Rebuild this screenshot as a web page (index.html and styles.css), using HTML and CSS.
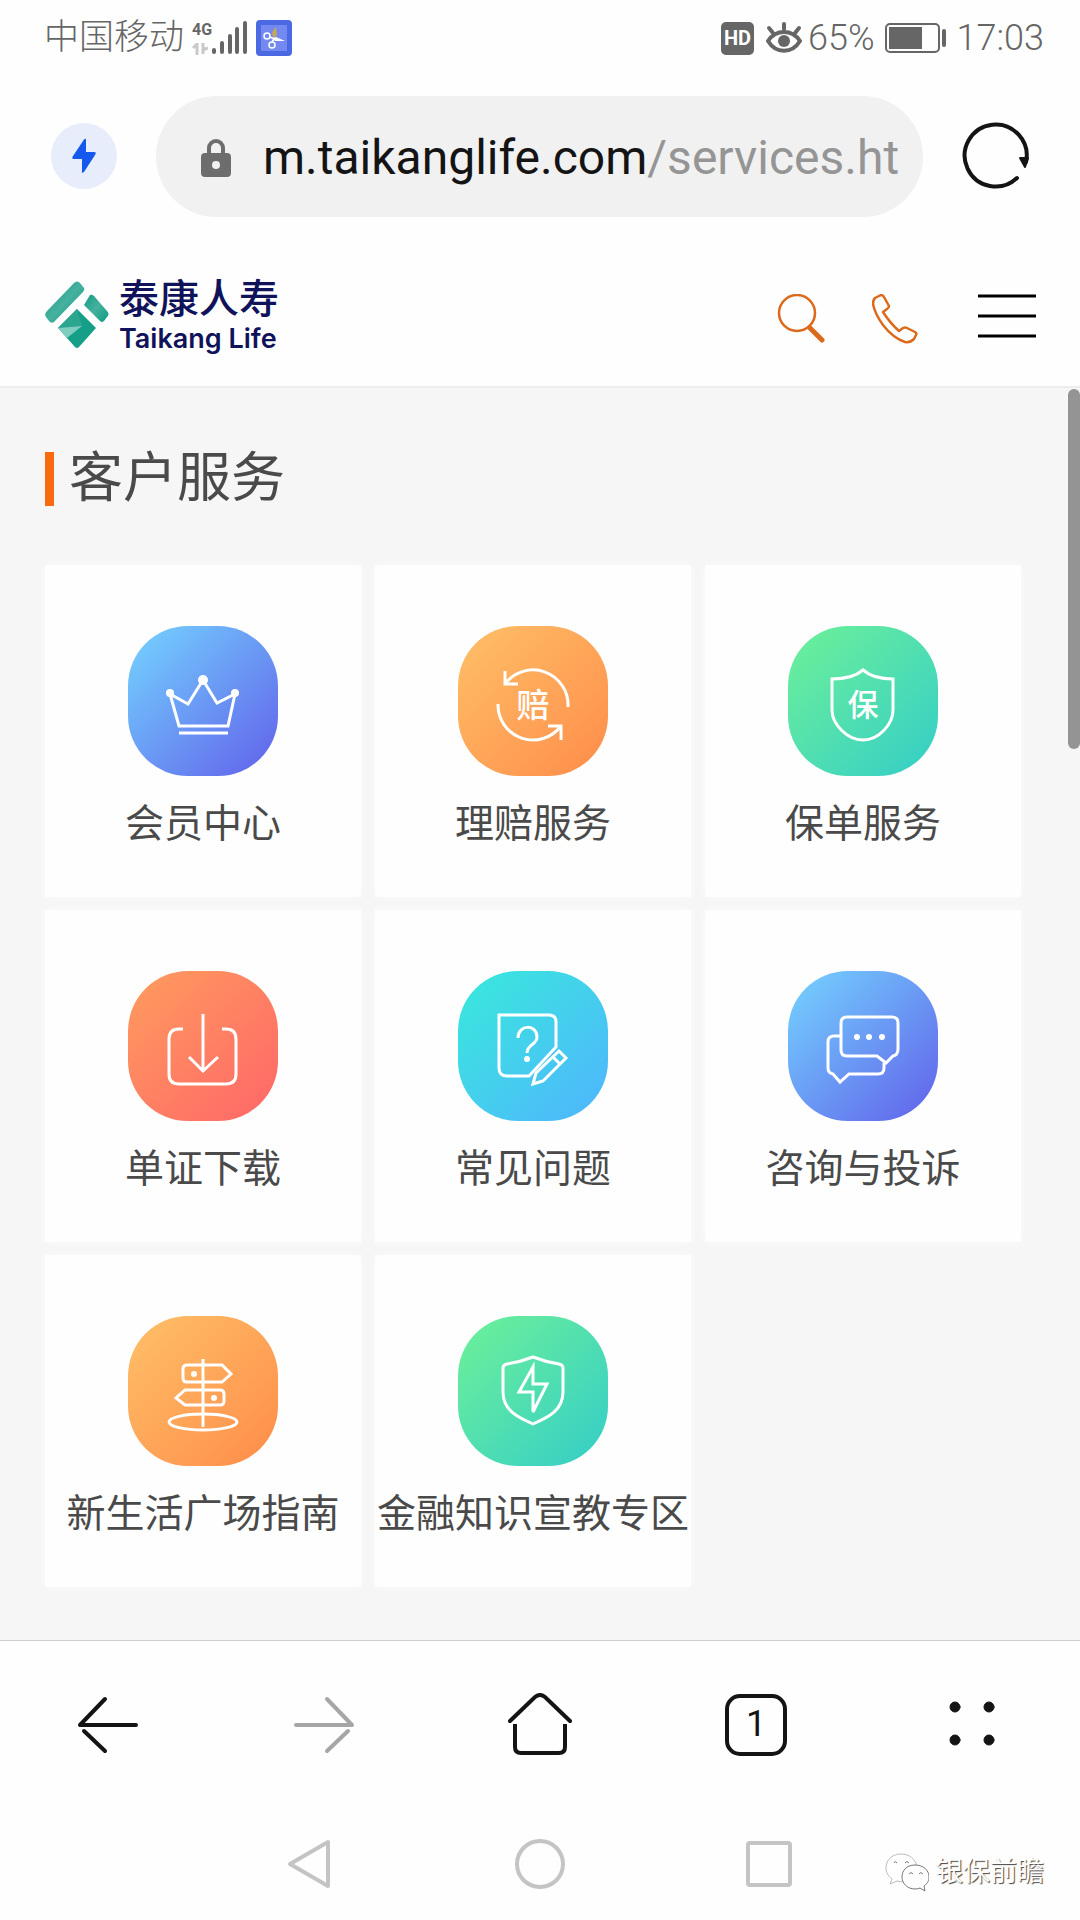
FILE: index.html
```
<!DOCTYPE html>
<html lang="zh-CN">
<head>
    <meta charset="UTF-8">
    <meta name="viewport" content="width=device-width, initial-scale=1.0">
    <title>泰康人寿 - 客户服务</title>
    <link rel="stylesheet" href="styles.css">
</head>
<body>
    <div class="status-bar">
        <div class="status-left">
            <span class="carrier">中国移动</span>
            <span class="signal">
                <span class="network">
                    <span>4G</span>
                    <svg width="16" height="12" viewBox="0 0 16 12" fill="none" stroke="#c9c9c9" stroke-width="3"><path d="M1 5L5 1V12M11 0V11M11 7L16 5"/></svg>
                </span>
                <svg width="36" height="34" viewBox="0 0 36 34" stroke="#666" stroke-width="4" stroke-linecap="round"><path d="M2 29V31M10 22V31M18 15V31M25 8V31M33 2V31"/></svg>
            </span>
            <svg class="app-icon" width="36" height="36" viewBox="0 0 36 36" fill="none">
                <rect width="36" height="36" rx="4" fill="#4a69e2"/>
                <rect x="5" y="5" width="26" height="26" fill="#7389f0"/>
                <path d="M17 18L16 12L20 7L21 15Z" fill="#c8a45c"/>
                <path d="M16 18L20 17L29 21L19 21Z" fill="#fff"/>
                <circle cx="11" cy="16" r="3" stroke="#fff" stroke-width="1.500"/>
                <circle cx="16" cy="25" r="3" stroke="#fff" stroke-width="1.500"/>
                <path d="M14 17L18 19L16 22" stroke="#fff" stroke-width="1.500"/>
            </svg>
        </div>
        <div class="status-right">
            <span class="hd">HD</span>
            <svg class="eye" width="36" height="32" viewBox="0 0 36 32" fill="none" stroke="#666" stroke-width="4" stroke-linecap="round">
                <path d="M2 19C10 7 26 7 34 19C26 32 10 32 2 19Z"/>
                <path d="M18 2V7M3 6L7 11M33 6L29 11"/>
                <circle cx="18" cy="19" r="6" fill="#666" stroke="none"/>
            </svg>
            <span>65%</span>
            <svg class="battery" width="62" height="30" viewBox="0 0 62 30" fill="none">
                <rect x="1" y="1" width="53" height="28" rx="4" stroke="#666" stroke-width="2"/>
                <rect x="4" y="4" width="33" height="22" fill="#666"/>
                <rect x="57" y="6" width="4" height="18" rx="2" fill="#666"/>
            </svg>
            <span class="clock">17:03</span>
        </div>
    </div>

    <div class="address-row">
        <button class="boost" aria-label="加速">
            <svg width="26" height="36" viewBox="0 0 26 36"><path d="M13 1.500Q15 0 15 2V14H23Q26 14 24 17L13 34Q10 36 11 33V21H3Q0 21 2 18Z" fill="#1558ee"/></svg>
        </button>
        <button class="address" aria-label="地址栏">
            <svg width="30" height="40" viewBox="0 0 30 40"><path d="M8 17V10A7 7 0 0 1 22 10V17" fill="none" stroke="#6d6d6d" stroke-width="4"/><path d="M4 15H26Q30 15 30 19V35Q30 39 26 39H4Q0 39 0 35V19Q0 15 4 15Z" fill="#6d6d6d"/><circle cx="15" cy="27" r="4" fill="#f1f1f1"/></svg>
            <span class="url">m.taikanglife.com<span class="url-path">/services.ht</span></span>
        </button>
        <button class="reload" aria-label="刷新">
            <svg width="68" height="68" viewBox="0 0 68 68" fill="none" stroke="#141414" stroke-width="4" stroke-linecap="round"><path d="M55 56A31 31 0 1 1 64 40"/><path d="M58 36H66L63 45Z" fill="#141414" stroke-width="2" stroke-linejoin="round"/></svg>
        </button>
    </div>

    <header class="site-header">
        <a class="logo" href="#">
            <svg width="64" height="70" viewBox="0 0 64 70">
                <defs>
                    <linearGradient id="teal" x1="0" y1="0" x2="1" y2="1">
                        <stop offset="0" stop-color="#159c84"/>
                        <stop offset="0.5" stop-color="#45b19e"/>
                        <stop offset="1" stop-color="#0c9a82"/>
                    </linearGradient>
                </defs>
                <path d="M29 3Q32 0 35 3L39 8Q40 10 38 12L9 42Q6 44 4 41L1 37Q-1 34 2 31Z" fill="url(#teal)"/>
                <path d="M45 15Q47 14 49 16L62 31Q65 34 62 37L59 41Q57 43 55 41L39 25Z" fill="url(#teal)"/>
                <path d="M32 29L51 48L34 67Q32 69 30 67L13 48Z" fill="#169f88"/>
                <path d="M32 29L13 48L37 46Z" fill="#2da68f"/>
                <path d="M13 48L37 46L22 58Z" fill="#7fcdbf"/>
            </svg>
            <span class="logo-text">
                <span class="logo-cn">泰康人寿</span>
                <span class="logo-en">Taikang Life</span>
            </span>
        </a>
        <nav class="header-tools">
            <button aria-label="搜索">
                <svg width="48" height="50" viewBox="0 0 48 50" fill="none" stroke="#dc6a1c" stroke-linecap="round"><circle cx="20" cy="19" r="18" stroke-width="2.500"/><path d="M33 34L45 46" stroke-width="5"/></svg>
            </button>
            <button class="phone" aria-label="电话">
                <svg width="46" height="50" viewBox="0 0 46 50" fill="none" stroke="#dc6a1c" stroke-width="2.500" stroke-linejoin="round"><path d="M3 4L9 1Q11 1 12 3L17 12Q17 14 15 15L11 18Q18 29 27 37L31 34Q33 33 35 34L43 38Q45 39 44 41L42 45Q38 49 33 48Q21 44 11 31Q3 20 1 10Q1 6 3 4Z"/></svg>
            </button>
            <button class="menu" aria-label="菜单">
                <svg width="58" height="44" viewBox="0 0 58 44" stroke="#000" stroke-width="3"><path d="M0 2H58M0 22H58M0 42H58"/></svg>
            </button>
        </nav>
    </header>

    <main class="content">
        <h1>客户服务</h1>
        <div class="services">
            <a class="card" href="#">
                <span class="tile blue">
                    <svg viewBox="0 0 150 150"><path d="M42 68L60 78L75 54L89 77L107 68L100 100H51Z"/><path d="M51 107H100"/><g class="solid"><circle cx="42" cy="67" r="4"/><circle cx="75" cy="54" r="5"/><circle cx="107" cy="67" r="4"/></g></svg>
                </span>
                <span class="label">会员中心</span>
            </a>
            <a class="card" href="#">
                <span class="tile orange">
                    <svg viewBox="0 0 150 150"><path d="M47 58A35 35 0 0 1 110 81M47 45V58H60M40 78A35 35 0 0 0 103 100M90 100H103V114"/><text x="75" y="91" font-size="33">赔</text></svg>
                </span>
                <span class="label">理赔服务</span>
            </a>
            <a class="card" href="#">
                <span class="tile green">
                    <svg viewBox="0 0 150 150"><path d="M75 44C67 51 57 53 44 53V84C44 98 59 114 75 114S105 98 105 84V53C93 53 83 51 75 44Z"/><text x="75" y="90" font-size="31">保</text></svg>
                </span>
                <span class="label">保单服务</span>
            </a>
            <a class="card" href="#">
                <span class="tile red">
                    <svg viewBox="0 0 150 150"><path d="M55 58H51Q41 58 41 68V103Q41 113 51 113H98Q108 113 108 103V68Q108 58 98 58H94M75 43V100M61 86L75 100L90 86"/></svg>
                </span>
                <span class="label">单证下载</span>
            </a>
            <a class="card" href="#">
                <span class="tile cyan">
                    <svg viewBox="0 0 150 150"><path d="M41 44H91Q98 44 98 51V76L71 105H49Q41 105 41 97Z"/><path d="M60 67C60 53 79 53 79 66C79 74 69 73 69 82"/><circle class="solid" cx="69" cy="88" r="3"/><path d="M75 113L78 102L101 80L108 87L85 110ZM95 86L102 93"/></svg>
                </span>
                <span class="label">常见问题</span>
            </a>
            <a class="card" href="#">
                <span class="tile blue">
                    <svg viewBox="0 0 150 150"><path d="M59 46H104Q110 46 110 52V78Q110 84 105 85L98 92L89 85H59Q53 85 53 79V52Q53 46 59 46Z"/><path d="M53 65H46Q40 65 40 71V97Q40 102 45 103L52 111L61 103H90Q96 103 96 97V92"/><g class="solid"><circle cx="69" cy="66" r="3"/><circle cx="81" cy="66" r="3"/><circle cx="94" cy="66" r="3"/></g></svg>
                </span>
                <span class="label">咨询与投诉</span>
            </a>
            <a class="card" href="#">
                <span class="tile orange">
                    <svg viewBox="0 0 150 150"><path d="M75 43V111M59 49H94L103 58L94 66H59Q55 66 55 62V53Q55 49 59 49ZM57 74H92Q96 74 96 78V85Q96 89 92 89H57L48 82Z"/><ellipse cx="75" cy="106" rx="34" ry="8"/><g class="solid"><circle cx="66" cy="58" r="3"/><circle cx="86" cy="82" r="3"/></g></svg>
                </span>
                <span class="label">新生活广场指南</span>
            </a>
            <a class="card" href="#">
                <span class="tile green">
                    <svg viewBox="0 0 150 150"><path d="M75 41Q88 46 101 48Q105 49 105 52V76C105 94 91 101 75 108C59 101 45 94 45 76V52Q45 49 49 48Q62 46 75 41ZM75 51L61 76H75V96L89 68H75Z"/></svg>
                </span>
                <span class="label">金融知识宣教专区</span>
            </a>
        </div>
        <div class="scrollbar"></div>
    </main>

    <nav class="browser-nav">
        <button aria-label="后退"><svg width="64" height="64" viewBox="0 0 64 64"><path d="M4 32H60M29 6L4 32M8 38L29 58"/></svg></button>
        <button class="disabled" aria-label="前进" disabled><svg width="64" height="64" viewBox="0 0 64 64"><path d="M4 32H60M35 6L60 32M56 38L35 58"/></svg></button>
        <button aria-label="主页"><svg width="64" height="64" viewBox="0 0 64 64"><path d="M2 28L27 4Q32 0 37 4L62 28"/><path stroke-linecap="butt" d="M7 31V54Q7 60 13 60H51Q57 60 57 54V31"/></svg></button>
        <button aria-label="标签页"><span class="tabs">1</span></button>
        <button aria-label="更多"><svg width="64" height="64" viewBox="0 0 64 64"><g class="dots"><circle cx="15" cy="14" r="5"/><circle cx="49" cy="14" r="5"/><circle cx="15" cy="47" r="5"/><circle cx="49" cy="47" r="5"/></g></svg></button>
    </nav>

    <nav class="system-nav">
        <button aria-label="返回"><svg width="52" height="52" viewBox="0 0 52 52"><path d="M6 26L44 4V48Z"/></svg></button>
        <button aria-label="桌面"><svg width="52" height="52" viewBox="0 0 52 52"><circle cx="26" cy="26" r="23"/></svg></button>
        <button aria-label="最近任务"><svg width="52" height="52" viewBox="0 0 52 52"><rect x="4" y="5" width="42" height="42" rx="2"/></svg></button>
        <div class="watermark">
            <svg width="44" height="40" viewBox="0 0 44 40" fill="#fff" stroke="#777" stroke-width="1">
                <path stroke="#bbb" d="M16 2C6 2 1 9 1 16C1 20 3 24 7 27L5 32L12 29C22 32 32 26 32 15C31 7 24 2 16 2Z"/>
                <path d="M30 13C21 13 17 19 17 25S22 37 30 37Q33 37 35 36L40 39L39 34C43 31 44 28 44 25C44 18 38 13 30 13Z"/>
                <path fill="none" d="M9 11Q10 8 12 11M20 11Q22 8 24 11M24 22Q26 19 28 22M34 22Q36 19 38 22"/>
            </svg>
            <span>银保前瞻</span>
        </div>
    </nav>
</body>
</html>
```
FILE: styles.css
```
* {
    box-sizing: border-box;
}

body {
    display: flex;
    flex-direction: column;
    min-height: 100vh;
    margin: 0;
    background: #fefefe;
    color: #4a4a4a;
    font-family: Roboto, "Noto Sans CJK SC", sans-serif;
}

button {
    display: flex;
    align-items: center;
    justify-content: center;
    padding: 0;
    border: none;
    background: none;
    color: inherit;
    font-family: inherit;
}

a {
    color: inherit;
    text-decoration: none;
}

svg {
    display: block;
    flex-shrink: 0;
}

/* phone status bar */
.status-bar {
    display: flex;
    align-items: center;
    justify-content: space-between;
    height: 76px;
    padding: 0 36px 0 44px;
    color: #666;
    font-size: 36px;
    font-weight: 300;
    line-height: 44px;
}

.status-left, .status-right {
    display: flex;
    align-items: center;
}

.carrier {
    font-size: 35px;
}

.signal {
    display: flex;
    align-items: flex-end;
    margin-left: 8px;
}

.network {
    display: flex;
    flex-direction: column;
    gap: 4px;
    font-size: 16px;
    font-weight: 700;
    line-height: 18px;
}

.app-icon {
    margin-left: 8px;
}

.hd {
    width: 33px;
    border-radius: 5px;
    background: #666;
    color: #fff;
    font-size: 20px;
    font-weight: 700;
    line-height: 33px;
    text-align: center;
}

.eye {
    margin: 0 6px 0 12px;
}

.battery {
    margin: 0 10px;
}

/* browser address bar */
.address-row {
    display: flex;
    align-items: center;
    height: 160px;
    padding: 0 50px 0 51px;
}

.boost {
    flex-shrink: 0;
    width: 66px;
    height: 66px;
    border-radius: 50%;
    background: #e8edfc;
}

.address {
    flex: 1;
    min-width: 0;
    justify-content: flex-start;
    gap: 32px;
    height: 121px;
    margin: 0 39px;
    padding: 3px 20px 0 45px;
    border-radius: 61px;
    background: #f1f1f1;
    color: #141414;
    font-size: 48px;
    line-height: 60px;
    white-space: nowrap;
}

.url-path {
    color: #959595;
}

/* site header */
.site-header {
    display: flex;
    align-items: center;
    justify-content: space-between;
    height: 150px;
    padding: 8px 44px 0 45px;
}

.logo {
    display: flex;
    align-items: center;
    gap: 10px;
    color: #10125a;
}

.logo-text {
    display: flex;
    flex-direction: column;
}

.logo-cn {
    font-size: 40px;
    font-weight: 500;
    line-height: 48px;
}

.logo-en {
    font-family: Inter, sans-serif;
    font-size: 27px;
    font-weight: 600;
    line-height: 30px;
}

.header-tools {
    display: flex;
    align-items: flex-end;
    padding-top: 8px;
}

.phone {
    margin: 0 60px 0 47px;
}

.menu {
    padding-bottom: 6px;
}

/* customer services */
.content {
    position: relative;
    flex: 1;
    padding: 64px 59px 53px 45px;
    border-top: 2px solid #ededed;
    background: #f6f6f6;
}

h1 {
    margin: 0 0 59px;
    padding-left: 15px;
    border-left: 9px solid #f96a0e;
    font-size: 54px;
    font-weight: 400;
    line-height: 54px;
}

.services {
    display: grid;
    grid-template-columns: repeat(3, 1fr);
    gap: 13px 14px;
}

.card {
    display: flex;
    flex-direction: column;
    align-items: center;
    gap: 22px;
    padding: 61px 0 47px;
    background: #fefefe;
    box-shadow: 0 0 6px #fafafa;
}

.tile {
    width: 150px;
    height: 150px;
    border-radius: 60px;
}

.tile svg {
    fill: none;
    stroke: #fff;
    stroke-width: 3;
}

.tile text, .tile .solid {
    fill: #fff;
    stroke: none;
}

.tile text {
    font-weight: 500;
    text-anchor: middle;
}

.blue {
    background: linear-gradient(135deg, #74d4ff, #6160ea);
}

.orange {
    background: linear-gradient(135deg, #ffc068, #ff8c4a);
}

.green {
    background: linear-gradient(135deg, #6ef198, #34cdc8);
}

.red {
    background: linear-gradient(135deg, #ff9c5e, #ff6668);
}

.cyan {
    background: linear-gradient(135deg, #38eadb, #50b4ff);
}

.label {
    font-size: 39px;
    line-height: 52px;
    white-space: nowrap;
}

.scrollbar {
    position: absolute;
    top: 1px;
    right: 0;
    width: 12px;
    height: 360px;
    border-radius: 6px;
    background: #949494;
}

/* bottom bars */
.browser-nav {
    display: grid;
    grid-template-columns: repeat(5, 1fr);
    height: 170px;
    padding-bottom: 2px;
    border-top: 1px solid #ccc;
    color: #141414;
}

.browser-nav svg {
    fill: none;
    stroke: currentColor;
    stroke-width: 4;
    stroke-linecap: round;
}

.browser-nav .disabled {
    color: #a6a6a6;
}

.browser-nav .dots {
    fill: currentColor;
    stroke-width: 1;
}

.tabs {
    width: 62px;
    height: 62px;
    border: 4px solid #141414;
    border-radius: 15px;
    font-size: 36px;
    font-weight: 400;
    line-height: 52px;
}

.system-nav {
    position: relative;
    display: flex;
    align-items: center;
    justify-content: center;
    gap: 178px;
    height: 110px;
    padding-bottom: 2px;
}

.system-nav button svg {
    fill: none;
    stroke: #c4c4c4;
    stroke-width: 4;
    stroke-linejoin: round;
}

.watermark {
    position: absolute;
    right: 36px;
    bottom: 28px;
    display: flex;
    align-items: center;
    gap: 7px;
    color: #fff;
    font-size: 27px;
    line-height: 40px;
    text-shadow: 1px 1px 1px #444;
}
```
